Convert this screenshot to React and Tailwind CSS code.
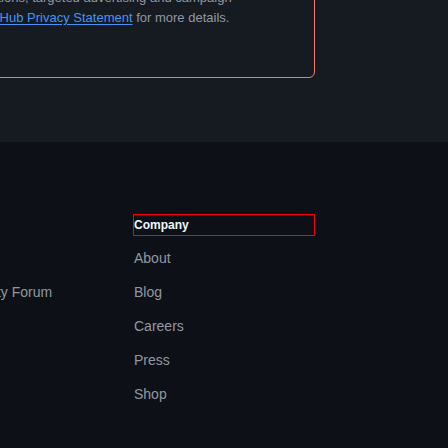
const companyLinks = ["About", "Blog", "Careers", "Press", "Shop"];
const supportLinks = ["Docs", "Community Forum", "Services", "Status"];

function FooterColumn({ title, links, outlined }) {
  return (
    <div className="w-[180px] shrink-0">
      <h2
        className={
          outlined
            ? "h-[20px] text-[12px] leading-[20px] font-semibold text-[#f0f6fc] outline outline-[#ff0000]"
            : "h-[20px] text-[12px] leading-[20px] font-semibold text-[#f0f6fc]"
        }
      >
        {title}
      </h2>
      <ul className="mt-[13px] flex flex-col gap-[14px]">
        {links.map((l) => (
          <li key={l} className="text-[14px] leading-[20px] text-[#9198a1] whitespace-nowrap">
            {l}
          </li>
        ))}
      </ul>
    </div>
  );
}

export default function App() {
  return (
    <div className="w-[448px] h-[448px] overflow-hidden bg-[#0d1117] font-['Liberation_Sans',Arial,sans-serif]">
      <div className="h-[142px] bg-[#161b22] overflow-hidden">
        <div className="-mt-[60px] -ml-[40px] w-[355px] rounded-md border border-[#f47a6d] pl-[22px] pt-[47px] pb-[49px]">
          <p className="text-[13px] leading-[20px] text-[#9198a1] whitespace-nowrap">
            options, targeted advertising and campaign
            <br />
            <a href="#" className="text-[#4493f8] underline underline-offset-2">
              GitHub Privacy Statement
            </a>{" "}
            for more details.
          </p>
        </div>
      </div>

      <div className="pt-[73px] -ml-[63px] flex gap-[17px]">
        <FooterColumn title="Help" links={supportLinks} />
        <FooterColumn title="Company" links={companyLinks} outlined />
      </div>
    </div>
  );
}
